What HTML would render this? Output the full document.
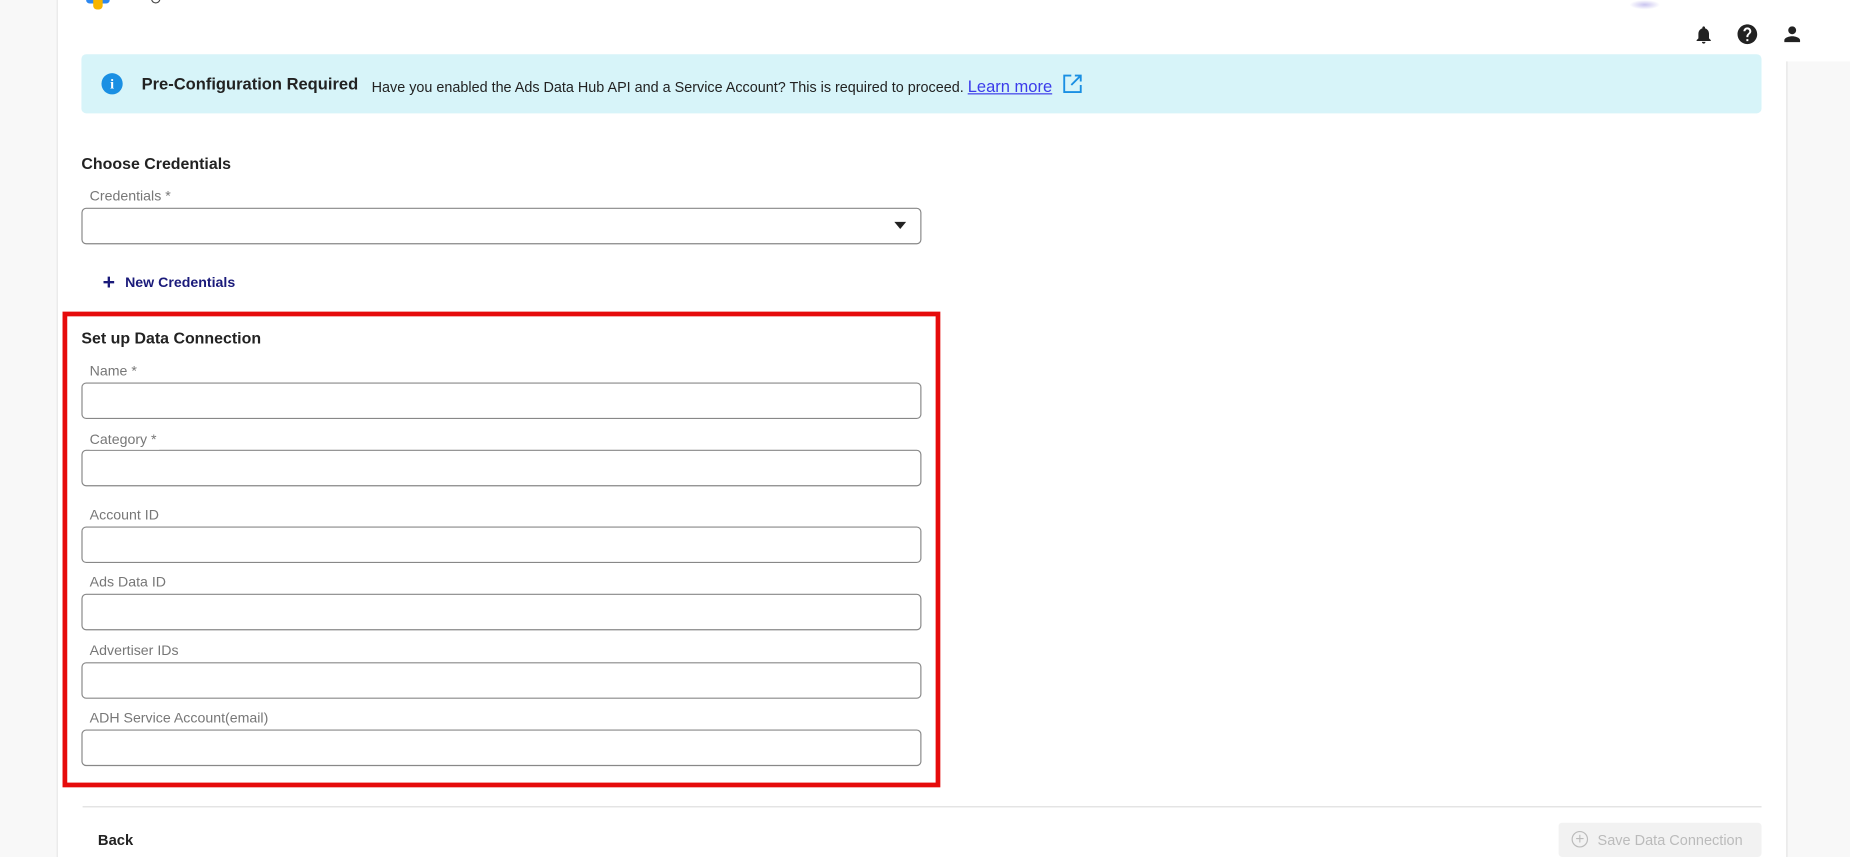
<!DOCTYPE html>
<html><head><meta charset="utf-8"><style>
html,body{margin:0;padding:0;width:1850px;height:857px;overflow:hidden;background:#fff;}
#w{position:absolute;left:0;top:0;width:1568px;height:726px;transform:scale(1.17985,1.1804);transform-origin:0 0;font-family:"Liberation Sans",sans-serif;color:#222;}
.a{position:absolute;}
.lbl{position:absolute;font-size:12px;color:#777;background:#fff;padding:0 2px 2px 0;}
.box{position:absolute;left:69px;width:710px;height:29px;border:1px solid #888;border-radius:4px;}
.h{font-size:13.5px;font-weight:bold;color:#222;}
</style></head><body><div id="w">
<div class="a" style="left:0;top:0;width:48px;height:726px;background:#f8f8f8;border-right:1px solid #e8e8e8"></div>
<div class="a" style="left:1514px;top:52px;width:54px;height:674px;background:#f8f8f8;border-left:1px solid #e4e4e4"></div>
<div class="a" style="left:73px;top:0;width:20px;height:3px;background:#2d88f0;border-radius:0 0 6px 6px"></div>
<div class="a" style="left:79px;top:0;width:8px;height:8px;background:#f7b500;border-radius:0 0 3px 3px"></div>
<div class="a" style="left:128px;top:-3px;width:6px;height:5px;border:1.5px solid #444;border-top:none;border-radius:0 0 4px 4px"></div>
<div class="a" style="left:1381px;top:0;width:26px;height:8px;background:radial-gradient(#c9c4ef,#fff 70%)"></div>
<svg class="a" style="left:1435px;top:20px" width="18" height="19" viewBox="0 0 24 24"><path fill="#222" d="M12 22c1.1 0 2-.9 2-2h-4c0 1.1.9 2 2 2zm6-6v-5c0-3.07-1.630-5.64-4.5-6.32V4c0-.83-.67-1.5-1.5-1.5s-1.5.67-1.5 1.5v.68C7.64 5.36 6 7.92 6 11v5l-2 2v1h16v-1l-2-2z"/></svg>
<svg class="a" style="left:1471px;top:19px" width="20" height="20" viewBox="0 0 24 24"><path fill="#222" d="M12 2C6.48 2 2 6.480 2 12s4.48 10 10 10 10-4.48 10-10S17.52 2 12 2zm1 17h-2v-2h2v2zm2.07-7.75l-.9.92C13.45 12.9 13 13.5 13 15h-2v-.5c0-1.1.45-2.1 1.17-2.83l1.24-1.26c.37-.36.59-.86.59-1.41 0-1.1-.9-2-2-2s-2 .9-2 2H8c0-2.21 1.79-4 4-4s4 1.79 4 4c0 .88-.36 1.68-.93 2.25z"/></svg>
<svg class="a" style="left:1509px;top:19px" width="20" height="20" viewBox="0 0 24 24"><path fill="#222" d="M12 12c2.21 0 4-1.79 4-4s-1.79-4-4-4-4 1.79-4 4 1.79 4 4 4zm0 2c-2.670 0-8 1.34-8 4v2h16v-2c0-2.66-5.33-4-8-4z"/></svg>

<div class="a" style="left:69px;top:46px;width:1424px;height:50px;background:#d7f4f9;border-radius:4px"></div>
<div class="a" style="left:86px;top:62px;width:18px;height:18px;border-radius:50%;background:#1a8fe3;color:#fff;font-size:12px;font-weight:bold;text-align:center;line-height:18px;font-family:'Liberation Serif',serif">i</div>
<div class="a h" style="left:120px;top:63px;font-size:14px">Pre-Configuration Required</div>
<div class="a" style="left:315px;top:65px;font-size:12.2px;color:#222;white-space:nowrap">Have you enabled the Ads Data Hub API and a Service Account? This is required to proceed. <span style="color:#3b3bea;text-decoration:underline;font-size:14px">Learn more</span></div>
<svg class="a" style="left:900px;top:62px" width="18" height="18" viewBox="0 0 18 18"><path d="M8 2H2v14h14v-6M11 2h5v5M16 2L8 10" fill="none" stroke="#1a8fe3" stroke-width="1.6"/></svg>

<div class="a h" style="left:69px;top:131px">Choose Credentials</div>
<div class="box" style="top:176px"></div>
<div class="lbl" style="left:76px;top:159px">Credentials *</div>
<div class="a" style="left:758px;top:188px;width:0;height:0;border-left:5px solid transparent;border-right:5px solid transparent;border-top:6px solid #222"></div>
<div class="a" style="left:87px;top:230px;font-size:18px;color:#1a1a7a;font-weight:bold;line-height:18px">+</div>
<div class="a" style="left:106px;top:232px;font-size:12px;font-weight:bold;color:#1a1a7a">New Credentials</div>

<div class="a" style="left:53px;top:264px;width:736px;height:395px;border:4px solid #e60b0b"></div>
<div class="a h" style="left:69px;top:279px">Set up Data Connection</div>
<div class="box" style="top:324px"></div><div class="lbl" style="left:76px;top:307px">Name *</div>
<div class="box" style="top:381px"></div><div class="lbl" style="left:76px;top:365px">Category *</div>
<div class="box" style="top:446px"></div><div class="lbl" style="left:76px;top:429px">Account ID</div>
<div class="box" style="top:503px"></div><div class="lbl" style="left:76px;top:486px">Ads Data ID</div>
<div class="box" style="top:561px"></div><div class="lbl" style="left:76px;top:544px">Advertiser IDs</div>
<div class="box" style="top:618px"></div><div class="lbl" style="left:76px;top:601px">ADH Service Account(email)</div>

<div class="a" style="left:70px;top:683px;width:1423px;height:1px;background:#ddd"></div>
<div class="a" style="left:83px;top:705px;font-size:12.5px;font-weight:bold;color:#222">Back</div>
<div class="a" style="left:1321px;top:697px;width:172px;height:29px;background:#f2f2f2;border-radius:3px"></div>
<div class="a" style="left:1332px;top:704px;width:12px;height:12px;border:1.3px solid #bbb;border-radius:50%;color:#bbb;font-size:13px;line-height:12px;text-align:center">+</div>
<div class="a" style="left:1354px;top:705px;font-size:12.3px;color:#bbb">Save Data Connection</div>
</div></body></html>
